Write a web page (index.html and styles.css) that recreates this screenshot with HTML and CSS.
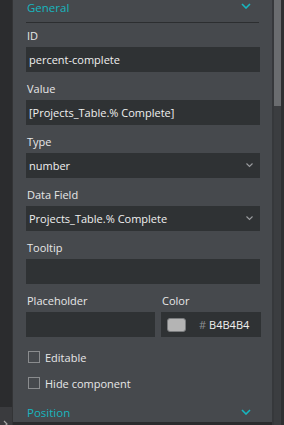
FILE: index.html
```html
<!DOCTYPE html>
<html lang="en">
<head>
    <meta charset="UTF-8">
    <meta name="viewport" content="width=device-width, initial-scale=1.0">
    <title>Properties</title>
    <link rel="stylesheet" href="styles.css">
</head>
<body>
    <div class="frame">
        <div class="rail">
            <div class="rail-foot">
                <svg width="6" height="8" viewBox="0 0 6 8"><path d="M1 1 L4 4 L1 7" fill="none" stroke="#a8a8a8" stroke-width="1.2"/></svg>
            </div>
        </div>

        <div class="panel">
            <div class="panel-body">
                <div class="section-head">
                    <span>General</span>
                    <svg class="chev" width="10" height="6" viewBox="0 0 10 6"><path d="M1 1 L5 5 L9 1" fill="none" stroke="#17b6bf" stroke-width="1.6"/></svg>
                </div>

                <div class="field">
                    <label>ID</label>
                    <div class="input">percent-complete</div>
                </div>
                <div class="field">
                    <label>Value</label>
                    <div class="input">[Projects_Table.% Complete]</div>
                </div>
                <div class="field">
                    <label>Type</label>
                    <div class="input select">
                        <span>number</span>
                        <svg width="7" height="5" viewBox="0 0 7 5"><path d="M0.5 0.5 L3.5 3.5 L6.5 0.5" fill="none" stroke="#9b9d9f" stroke-width="1.1"/></svg>
                    </div>
                </div>
                <div class="field">
                    <label>Data Field</label>
                    <div class="input select">
                        <span>Projects_Table.% Complete</span>
                        <svg width="7" height="5" viewBox="0 0 7 5"><path d="M0.5 0.5 L3.5 3.5 L6.5 0.5" fill="none" stroke="#9b9d9f" stroke-width="1.1"/></svg>
                    </div>
                </div>
                <div class="field">
                    <label>Tooltip</label>
                    <div class="input"></div>
                </div>
                <div class="field-row">
                    <div class="field">
                        <label>Placeholder</label>
                        <div class="input"></div>
                    </div>
                    <div class="field">
                        <label>Color</label>
                        <div class="input color">
                            <span class="swatch"></span>
                            <span class="hash">#</span>
                            <span>B4B4B4</span>
                        </div>
                    </div>
                </div>

                <div class="checks">
                    <div class="check"><span class="box"></span>Editable</div>
                    <div class="check"><span class="box"></span>Hide component</div>
                </div>

                <div class="section-head closed">
                    <span>Position</span>
                    <svg class="chev" width="10" height="6" viewBox="0 0 10 6"><path d="M1 1 L5 5 L9 1" fill="none" stroke="#17b6bf" stroke-width="1.6"/></svg>
                </div>
            </div>
        </div>

        <div class="scrollbar">
            <div class="thumb"></div>
        </div>
    </div>
</body>
</html>
```

FILE: styles.css
```css
body {
    margin: 0;
    font-family: "Open Sans", "Noto Sans", sans-serif;
    font-size: 11px;
    background-color: #2b2c2e;
}
.frame {
    display: flex;
    height: 425px;
    overflow: hidden;
}
.rail {
    width: 12px;
    background-color: #2b2c2e;
    border-right: 1px solid #333436;
    display: flex;
    flex-direction: column;
    justify-content: flex-end;
}
.rail-foot {
    height: 21px;
    background-color: #3a3b3e;
    display: flex;
    align-items: flex-end;
    padding-left: 3px;
    margin-bottom: -3px;
}
.panel {
    flex: 1;
    background-color: #46494d;
    border-bottom: 3px solid #2a2b2d;
    overflow: hidden;
}
.panel-body {
    padding: 0 12px 0 13px;
}
.section-head {
    display: flex;
    justify-content: space-between;
    align-items: center;
    height: 16px;
    padding: 0 8px 6px 1px;
    margin-right: 1px;
    color: #17b6bf;
    font-size: 11.5px;
    line-height: 16px;
    border-bottom: 1px solid #2c2e30;
}
.section-head .chev {
    margin-top: -4px;
}
.section-head.closed {
    border-bottom: none;
    margin-top: 9px;
    padding-bottom: 0;
}
.section-head.closed .chev {
    margin-top: -2px;
}
.field {
    display: flex;
    flex-direction: column;
    margin-top: 9px;
}
.section-head + .field {
    margin-top: 5px;
}
.field label {
    color: #e6e7e8;
    line-height: 16px;
    padding: 0 0 3px 1px;
}
.input {
    height: 25px;
    background-color: #2f3234;
    color: #eff0f0;
    line-height: 25px;
    padding: 0 7px 0 3px;
    display: flex;
    align-items: center;
    white-space: nowrap;
}
.select {
    justify-content: space-between;
}
.field-row {
    display: grid;
    grid-template-columns: 1fr 100px;
    gap: 6px;
    margin-right: -1px;
}
.color {
    padding-left: 6px;
}
.swatch {
    width: 17px;
    height: 12px;
    background-color: #b4b4b4;
    border: 1px solid #7a7c7e;
    border-radius: 3px;
    margin-right: 13px;
}
.hash {
    color: #8d8f91;
    margin-right: 3px;
}
.checks {
    margin-top: 7px;
}
.check {
    display: flex;
    align-items: center;
    height: 26px;
    color: #e6e7e8;
    padding-left: 2px;
}
.box {
    width: 10px;
    height: 10px;
    border: 1px solid #8a8c8e;
    margin-right: 5px;
}
.scrollbar {
    width: 7px;
    background-color: #3b3d40;
    border-left: 2px solid #36383b;
    border-right: 3px solid #2e2f31;
}
.thumb {
    height: 106px;
    background-color: #6a6c6f;
}
```
